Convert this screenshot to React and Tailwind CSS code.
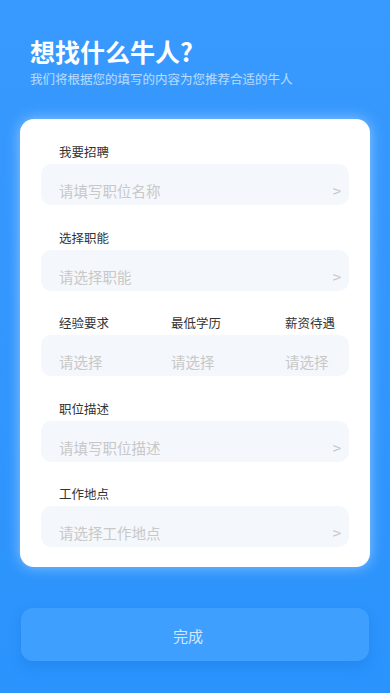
const font = { fontFamily: '"Noto Sans CJK SC", "Noto Sans", sans-serif' };

function Field({ label, placeholder }) {
  return (
    <div>
      <div className="pl-[18px] h-[18px] leading-[18px] text-[12.5px] text-[#333]">{label}</div>
      <div className="mt-[3px] h-[41px] rounded-[10px] bg-[#f4f7fb] flex justify-between pl-[18px] pr-[8px] pt-[17px]">
        <span className="text-[14.5px] leading-[20px] text-[#c8c8c8]">{placeholder}</span>
        <span className="text-[15px] leading-[20px] text-[#c8c8c8]">&gt;</span>
      </div>
    </div>
  );
}

export default function App() {
  return (
    <div style={font} className="min-h-[693px] bg-gradient-to-b from-[#3899fe] to-[#2b93fc] flex flex-col">
      <div className="px-[30px] pt-[36px]">
        <h1 className="text-[25px] leading-[30px] font-bold text-white">想找什么牛人?</h1>
        <p className="mt-[5px] text-[12.5px] leading-[16px] text-white/65">我们将根据您的填写的内容为您推荐合适的牛人</p>
      </div>

      <div className="mx-5 mt-[32px] bg-white rounded-[14px] shadow-[0_0_14px_rgba(255,255,255,0.45)] px-[21px] pt-[24px] pb-[20px] flex flex-col gap-[23.5px]">
        <Field label="我要招聘" placeholder="请填写职位名称" />
        <Field label="选择职能" placeholder="请选择职能" />
        <div>
          <div className="pl-[18px] grid grid-cols-[112px_114px_1fr] h-[18px] leading-[18px] text-[12.5px] text-[#333]">
            <span>经验要求</span>
            <span>最低学历</span>
            <span>薪资待遇</span>
          </div>
          <div className="mt-[3px] h-[41px] rounded-[10px] bg-[#f4f7fb] pl-[18px] pt-[17px] grid grid-cols-[112px_114px_1fr] text-[14.5px] leading-[20px] text-[#c8c8c8]">
            <span>请选择</span>
            <span>请选择</span>
            <span>请选择</span>
          </div>
        </div>
        <Field label="职位描述" placeholder="请填写职位描述" />
        <Field label="工作地点" placeholder="请选择工作地点" />
      </div>

      <button className="mx-[21px] mt-[41px] h-[53px] pt-[4px] pr-[14px] rounded-[12px] bg-[#3e9fff] shadow-[0_6px_12px_rgba(20,110,220,0.3)] text-[15px] text-[#d3e8ff]">
        完成
      </button>
    </div>
  );
}
